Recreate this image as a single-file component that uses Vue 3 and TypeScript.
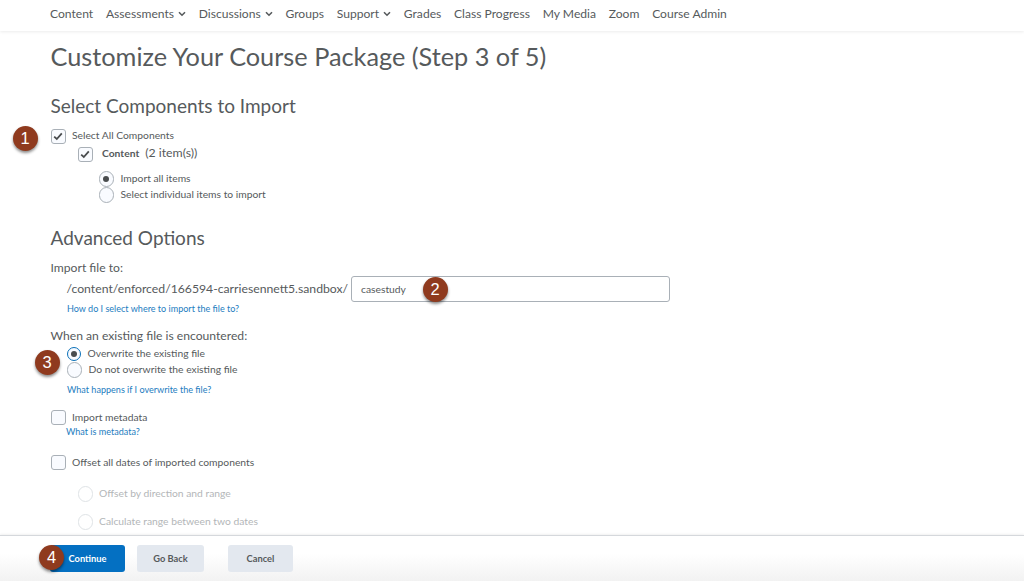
<script setup lang="ts">
const navItems: { label: string; caret?: boolean }[] = [
  { label: 'Content' },
  { label: 'Assessments', caret: true },
  { label: 'Discussions', caret: true },
  { label: 'Groups' },
  { label: 'Support', caret: true },
  { label: 'Grades' },
  { label: 'Class Progress' },
  { label: 'My Media' },
  { label: 'Zoom' },
  { label: 'Course Admin' },
]
</script>

<template>
  <div class="page">
    <nav class="nav">
      <span v-for="item in navItems" :key="item.label" class="nav-item">
        {{ item.label }}
        <svg v-if="item.caret" class="caret" width="8" height="6" viewBox="0 0 8 6">
          <path d="M1 1.2 L4 4.2 L7 1.2" fill="none" stroke="#565a5c" stroke-width="1.6" />
        </svg>
      </span>
    </nav>

    <main class="main">
      <h1 class="title">Customize Your Course Package (Step 3 of 5)</h1>

      <h2 class="section first">Select Components to Import</h2>
      <div class="row all">
        <span class="badge b1">1</span>
        <span class="check">
          <svg width="10" height="9" viewBox="0 0 10 9"><path d="M1.2 4.6 L3.8 7 L8.8 1.4" fill="none" stroke="#494c4e" stroke-width="1.8" /></svg>
        </span>
        <span class="label">Select All Components</span>
      </div>
      <div class="row content">
        <span class="check">
          <svg width="10" height="9" viewBox="0 0 10 9"><path d="M1.2 4.6 L3.8 7 L8.8 1.4" fill="none" stroke="#494c4e" stroke-width="1.8" /></svg>
        </span>
        <span class="label strong">Content</span>
        <span class="count">(2 item(s))</span>
      </div>
      <div class="radios indent-import">
        <div class="row r16"><span class="radio on"></span><span class="label">Import all items</span></div>
        <div class="row r16"><span class="radio"></span><span class="label">Select individual items to import</span></div>
      </div>

      <h2 class="section advanced">Advanced Options</h2>
      <div class="field-label">Import file to:</div>
      <div class="path-row">
        <span class="path">/content/enforced/166594-carriesennett5.sandbox/</span>
        <div class="input">
          casestudy
          <span class="badge b2">2</span>
        </div>
      </div>
      <a class="help help-path">How do I select where to import the file to?</a>

      <div class="field-label existing">When an existing file is encountered:</div>
      <div class="radios indent-over">
        <span class="badge b3">3</span>
        <div class="row r16"><span class="radio on focus"></span><span class="label">Overwrite the existing file</span></div>
        <div class="row r16"><span class="radio"></span><span class="label">Do not overwrite the existing file</span></div>
      </div>
      <a class="help help-over">What happens if I overwrite the file?</a>

      <div class="row meta"><span class="check"></span><span class="label">Import metadata</span></div>
      <a class="help help-meta">What is metadata?</a>

      <div class="row offset"><span class="check"></span><span class="label">Offset all dates of imported components</span></div>
      <div class="row dis d1"><span class="radio off"></span><span class="label">Offset by direction and range</span></div>
      <div class="row dis d2"><span class="radio off"></span><span class="label">Calculate range between two dates</span></div>
    </main>

    <footer class="footer">
      <button class="btn primary">
        <span class="badge b4">4</span>
        Continue
      </button>
      <button class="btn back">Go Back</button>
      <button class="btn cancel">Cancel</button>
    </footer>
  </div>
</template>

<style scoped>
.page {
  width: 1024px;
  height: 581px;
  display: flex;
  flex-direction: column;
  overflow: hidden;
  background: #fff;
  color: #565a5c;
  font-family: Lato, "Open Sans", sans-serif;
  font-size: 10px;
}
.nav {
  height: 31px;
  flex: none;
  box-sizing: border-box;
  padding: 0 0 4px 50px;
  display: flex;
  align-items: center;
  gap: 12.75px;
  font-size: 12.1px;
  box-shadow: 0 1px 3px rgba(0, 0, 0, 0.08);
  position: relative;
}
.nav-item {
  display: inline-flex;
  align-items: center;
  gap: 4px;
  white-space: nowrap;
}
.caret { margin-top: 1px; }
.main {
  flex: 1;
  min-height: 0;
  overflow: hidden;
  padding-left: 50.5px;
}
.title {
  margin: 8px 0 0;
  font-size: 25.3px;
  line-height: 34px;
  font-weight: 400;
  color: #565a5c;
}
.section {
  margin: 0;
  font-size: 19px;
  line-height: 26px;
  font-weight: 400;
  color: #565a5c;
}
.first { margin-top: 20px; }
.advanced { margin-top: 23px; }
.row {
  display: flex;
  align-items: center;
  position: relative;
}
.label {
  font-size: 10.3px;
  white-space: nowrap;
}
.check {
  width: 13.5px;
  height: 13.5px;
  flex: none;
  border: 1px solid #a9b0b7;
  border-radius: 3px;
  background: #f9fbff;
  display: inline-flex;
  align-items: center;
  justify-content: center;
}
.all { margin-top: 7px; height: 17px; gap: 6px; }
.all .check, .content .check { margin-top: 4px; }
.meta .check, .offset .check { margin-top: 2px; }
.content { margin-top: 1px; height: 17px; margin-left: 27px; gap: 9px; }
.strong { font-weight: 700; }
.count { font-size: 12.3px; margin-left: -3px; }
.radios { position: relative; }
.indent-import { margin-left: 48px; margin-top: 9px; }
.indent-over { margin-left: 16px; margin-top: 1px; }
.r16 { height: 16px; gap: 6.5px; }
.radio {
  width: 13.5px;
  height: 13.5px;
  flex: none;
  margin-top: 2px;
  border: 1px solid #a9b0b7;
  border-radius: 50%;
  background: #f9fbff;
  display: inline-flex;
  align-items: center;
  justify-content: center;
}
.radio.on::after {
  content: "";
  width: 6px;
  height: 6px;
  border-radius: 50%;
  background: #494c4e;
}
.radio.focus {
  border: 1.5px solid #0a70b8;
  width: 12.5px;
  height: 12.5px;
}
.radio.off { background: #fff; border-color: #dfe3e6; }
.field-label { font-size: 12.15px; line-height: 16px; }
.field-label:not(.existing) { margin-top: 9px; }
.existing { margin-top: 13px; }
.path-row {
  display: flex;
  align-items: center;
  margin-left: 16px;
  margin-top: -1px;
  height: 27px;
  width: 603.5px;
}
.path { font-size: 12.22px; white-space: nowrap; }
.input {
  width: 319px;
  height: 26px;
  box-sizing: border-box;
  border: 1px solid #a9b0b7;
  border-radius: 3px;
  padding-left: 9px;
  display: flex;
  align-items: center;
  font-size: 10.3px;
  position: relative;
  margin-left: auto;
}
.help {
  display: block;
  color: #1c7cc0;
  font-size: 9.05px;
  line-height: 12px;
}
.help-path { margin-left: 16.5px; margin-top: 1px; }
.help-over { margin-left: 16.5px; margin-top: 7px; }
.meta { margin-top: 13px; height: 15px; gap: 6px; }
.help-meta { margin-left: 15.5px; margin-top: 2px; }
.offset { margin-top: 16px; height: 15px; gap: 6px; }
.dis { margin-left: 27px; height: 16px; gap: 6px; color: #b3b6b8; }
.d1 { margin-top: 16px; }
.d2 { margin-top: 12px; }
.badge {
  position: absolute;
  width: 25px;
  height: 25px;
  border-radius: 50%;
  background: #8f3a1e;
  color: #fff;
  font-family: "Liberation Sans", sans-serif;
  font-size: 16.5px;
  display: flex;
  align-items: center;
  justify-content: center;
  box-shadow: 0 2px 3px rgba(0, 0, 0, 0.45);
  z-index: 2;
}
.b1 { left: -38px; top: 0; }
.b2 { left: 70.5px; top: 0; }
.b3 { left: -32px; top: 5px; }
.b4 { left: -11px; top: 0; font-weight: 400; }
.footer {
  height: 46px;
  flex: none;
  box-sizing: border-box;
  padding: 9px 0 0 50px;
  display: flex;
  align-items: flex-start;
  gap: 12px;
  border-top: 1px solid #d5d8dc;
  background: linear-gradient(#fff 40%, #f2f2f2);
  box-shadow: 0 -1px 2px rgba(0, 0, 0, 0.06);
  position: relative;
}
.btn {
  height: 27px;
  border: none;
  border-radius: 3px;
  font-family: Lato, sans-serif;
  font-size: 9.3px;
  font-weight: 700;
  padding: 0;
  position: relative;
  background: #e3e8ef;
  color: #565a5c;
}
.primary {
  width: 75px;
  background: #0470c2;
  color: #fff;
}
.back { width: 67px; }
.cancel { width: 65px; margin-left: 12px; }
</style>
